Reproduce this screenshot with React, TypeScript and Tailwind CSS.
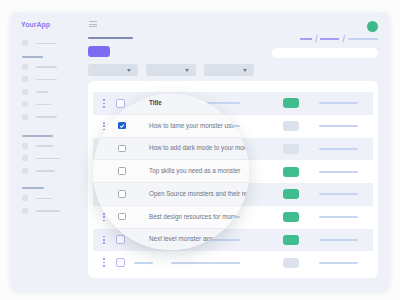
import { Fragment } from 'react'

interface Row {
  title: string
  badge: 'green' | 'gray'
  header?: boolean
  checked?: boolean
}

const ROWS: Row[] = [
  { title: 'Title', badge: 'green', header: true },
  { title: 'How to tame your monster using', badge: 'gray', checked: true },
  { title: 'How to add dark mode to your monster', badge: 'gray' },
  { title: 'Top skills you need as a monster', badge: 'green' },
  { title: 'Open Source monsters and their repos', badge: 'green' },
  { title: 'Best design resources for monsters', badge: 'green' },
  { title: 'Next level monster apps', badge: 'green' },
  { title: '', badge: 'gray' },
]

// sidebar: section header lines and item rows (square + line)
const SIDEBAR: { kind: 'item' | 'head'; w: number; mt: string }[] = [
  { kind: 'item', w: 21, mt: 'mt-[8px]' },
  { kind: 'head', w: 21, mt: 'mt-[3px]' },
  { kind: 'item', w: 21, mt: 'mt-0' },
  { kind: 'item', w: 21, mt: 'mt-0' },
  { kind: 'item', w: 12, mt: 'mt-0' },
  { kind: 'item', w: 15, mt: 'mt-0' },
  { kind: 'item', w: 21, mt: 'mt-0' },
  { kind: 'head', w: 31, mt: 'mt-[8.5px]' },
  { kind: 'item', w: 17, mt: 'mt-0' },
  { kind: 'item', w: 24, mt: 'mt-0' },
  { kind: 'item', w: 19, mt: 'mt-0' },
  { kind: 'head', w: 22, mt: 'mt-[7px]' },
  { kind: 'item', w: 16, mt: 'mt-0' },
  { kind: 'item', w: 24, mt: 'mt-0' },
]

function Dots() {
  return (
    <div className="flex flex-col gap-[1.8px]">
      <span className="w-[1.6px] h-[1.6px] rounded-full bg-[#8f7ff0]" />
      <span className="w-[1.6px] h-[1.6px] rounded-full bg-[#8f7ff0]" />
      <span className="w-[1.6px] h-[1.6px] rounded-full bg-[#8f7ff0]" />
    </div>
  )
}

function Dropdown() {
  return (
    <div className="w-[50px] h-[12px] rounded-[3px] bg-[#dae0ea] flex items-center justify-end pr-[7px]">
      <span className="w-0 h-0 border-l-[2.5px] border-r-[2.5px] border-t-[3px] border-l-transparent border-r-transparent border-t-[#6e7c9a]" />
    </div>
  )
}

export default function App() {
  return (
    <div className="w-[400px] h-[300px] bg-[#fcfcfd] pt-[12px] pl-[10px] font-['Liberation_Sans',Arial,sans-serif]">
      <div className="w-[380px] h-[280px] rounded-[8px] bg-[#eef1f7] shadow-[0_1px_5px_rgba(40,50,80,0.08)] flex">
        {/* sidebar */}
        <div className="w-[78px] pl-[12px] pt-[9px] flex flex-col">
          <div className="text-[7px] leading-[8px] font-bold text-[#8a7af0] -ml-[1px]">YourApp</div>
          {SIDEBAR.map((s, i) =>
            s.kind === 'item' ? (
              <div key={i} className={`${s.mt} h-[12.5px] flex items-center`}>
                <span className="w-[6px] h-[6px] rounded-[1px] bg-[#dce2ed]" />
                <span className="ml-[8px] h-[1.5px] rounded-full bg-[#d0d8e6]" style={{ width: s.w }} />
              </div>
            ) : (
              <div key={i} className={`${s.mt} h-[8px] flex items-center`}>
                <span className="h-[2px] rounded-full bg-[#a9b5ca]" style={{ width: s.w }} />
              </div>
            )
          )}
        </div>

        {/* main */}
        <div className="w-[290px] pt-[9px] flex flex-col">
          <div className="flex justify-between">
            <div className="flex flex-col">
              <div className="ml-[1px] h-[6px] w-[8px] flex flex-col justify-between">
                <span className="h-[1px] bg-[#b3bccd]" />
                <span className="h-[1px] bg-[#b3bccd]" />
                <span className="h-[1px] bg-[#b3bccd]" />
              </div>
              <div className="mt-[10px] h-[2px] w-[45px] rounded-full bg-[#7f8cab]" />
              <div className="mt-[7px] h-[11px] w-[22px] rounded-[3px] bg-[#7d6cf1]" />
              <div className="mt-[7px] flex gap-[8px]">
                <Dropdown />
                <Dropdown />
                <Dropdown />
              </div>
            </div>
            <div className="flex flex-col items-end">
              <div className="w-[11px] h-[11px] rounded-full bg-[#3dba8b]" />
              <div className="mt-[3px] h-[8px] flex items-center">
                <span className="w-[12px] h-[1.5px] bg-[#a99cf2]" />
                <span className="mx-[3px] text-[9px] leading-[8px] text-[#a99cf2]">/</span>
                <span className="w-[19px] h-[1.5px] bg-[#a99cf2]" />
                <span className="mx-[3px] text-[9px] leading-[8px] text-[#a99cf2]">/</span>
                <span className="w-[30px] h-[1.5px] bg-[#c3d3ef]" />
              </div>
              <div className="mt-[5px] h-[10px] w-[106px] rounded-full bg-white" />
            </div>
          </div>

          {/* table card */}
          <div className="relative mt-[5px] h-[197px] rounded-[6px] bg-white px-[5px] pt-[11px]">
            {ROWS.map((r, i) => (
              <div
                key={i}
                className={`h-[22.75px] flex items-center ${i % 2 === 0 ? 'bg-[#eef1f7]' : 'bg-white'}`}
              >
                <div className="w-[22px] flex justify-center">
                  <Dots />
                </div>
                <span className="ml-[1px] w-[9px] h-[9px] rounded-[2px] border border-[#bdb2f6] bg-white" />
                <span className="ml-[9px] w-[19px] h-[2px] rounded-full bg-[#c6d5f0]" />
                <span className="ml-[18px] w-[69px] h-[2px] rounded-full bg-[#c6d5f0]" />
                <span
                  className={`ml-[43px] w-[16px] h-[10px] rounded-[3px] ${r.badge === 'green' ? 'bg-[#40bd8f]' : 'bg-[#dbe2ed]'}`}
                />
                <span className="ml-[20px] w-[39px] h-[2px] rounded-full bg-[#c6d5f0]" />
              </div>
            ))}

            {/* magnifier */}
            <div className="absolute left-[4.5px] top-[13px] w-[156px] h-[156px] rounded-full overflow-hidden bg-white shadow-[0_5px_16px_rgba(50,60,90,0.18)]">
              <div className="absolute left-[0.5px] top-[-2px] w-[280px]">
                {ROWS.map((r, i) => (
                  <Fragment key={i}>
                    <div
                      className={`h-[22.75px] flex items-center border-b border-[#e9ebef] ${i % 2 === 0 ? 'bg-[#f4f5f8]' : 'bg-[#fbfbfc]'}`}
                    >
                      <span
                        className={`ml-[25px] w-[7.5px] h-[7.5px] rounded-[1.5px] flex items-center justify-center ${r.checked ? 'bg-[#1f5fd6]' : 'border border-[#a3aab6] bg-white'}`}
                      >
                        {r.checked && (
                          <svg width="6" height="6" viewBox="0 0 6 6">
                            <path d="M1.2 3.1 L2.5 4.3 L4.9 1.6" fill="none" stroke="white" strokeWidth="1.1" />
                          </svg>
                        )}
                      </span>
                      <span
                        className={`ml-[23.5px] whitespace-nowrap text-[6.3px] leading-[8px] ${r.header ? 'font-bold text-[#3b4352]' : 'text-[#6b7383]'}`}
                      >
                        {r.title}
                      </span>
                    </div>
                  </Fragment>
                ))}
              </div>
            </div>
          </div>
        </div>
      </div>
    </div>
  )
}
